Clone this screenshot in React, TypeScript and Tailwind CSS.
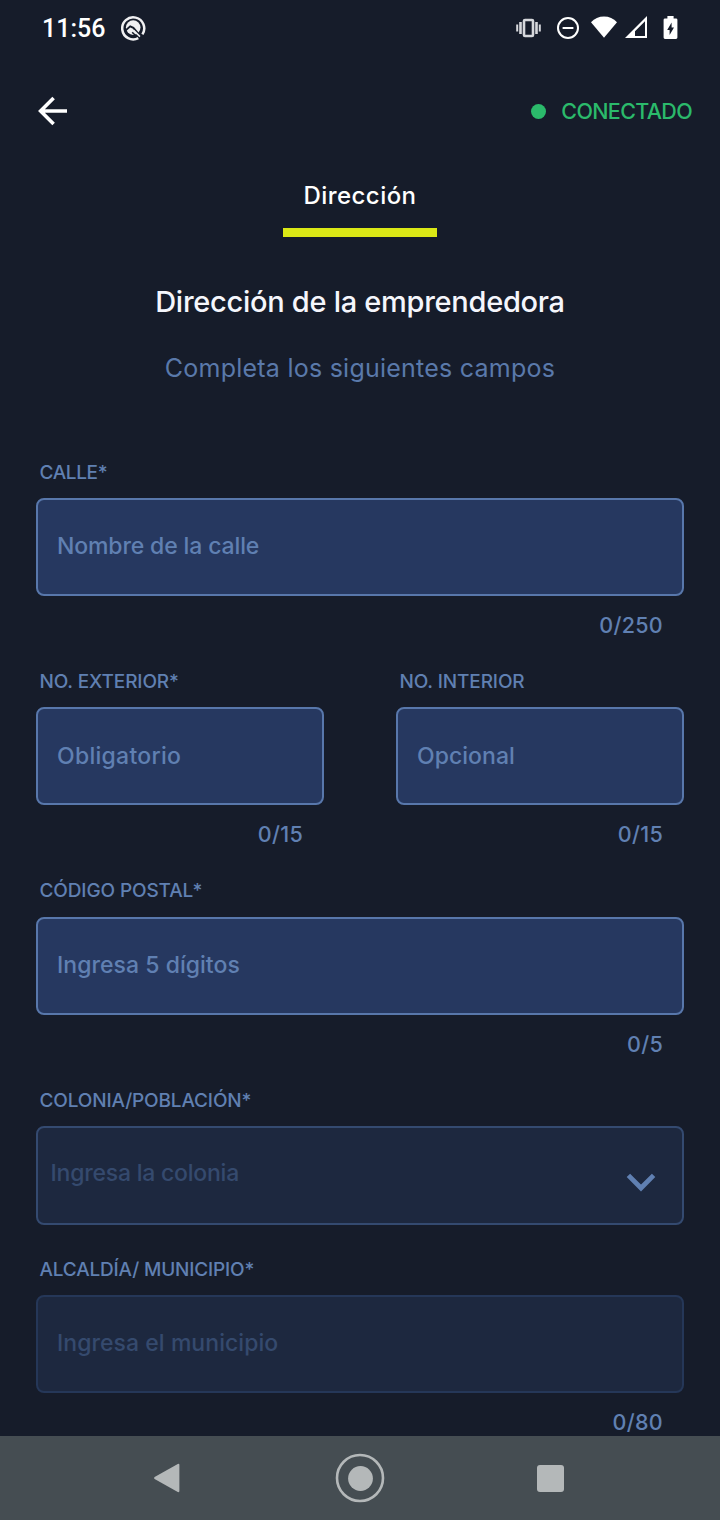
import type { ReactNode } from "react";

type FieldProps = {
  label: string;
  labelClass: string;
  placeholder: string;
  placeholderClass: string;
  counter?: string;
  disabled?: boolean;
};

function Label({ children, className }: { children: ReactNode; className: string }) {
  return (
    <div className={`h-[25px] pt-[0.6px] pl-[3.5px] text-[19px] leading-6 font-medium whitespace-nowrap text-[#6080b2] ${className}`}>
      {children}
    </div>
  );
}

function Field({ label, labelClass, placeholder, placeholderClass, counter, disabled }: FieldProps) {
  return (
    <div className="flex flex-1 flex-col">
      <Label className={labelClass}>{label}</Label>
      <div
        className={`mt-[13px] flex h-[98px] items-center rounded-lg border-2 pb-px pl-[19px] text-[23px] font-medium whitespace-nowrap ${
          disabled ? "border-[#253758] bg-[#1d283f] text-[#354a6e]" : "border-[#5877ab] bg-[#263860] text-[#6080b2]"
        } ${placeholderClass}`}
      >
        {placeholder}
      </div>
      <div className="mt-[17px] h-6 pr-[21px] text-right text-[21.5px] leading-6 font-medium tracking-[0.3px] text-[#6080b2]">
        {counter}
      </div>
    </div>
  );
}

function StatusBar() {
  return (
    <div className="flex h-14 items-center justify-between pr-[41px] pl-[42px] text-white">
      <div className="flex items-center">
        <span className="w-[79px] pt-0.5 font-['Roboto',sans-serif] text-[25px] leading-7 font-medium">11:56</span>
        <svg width="25" height="26" viewBox="0 0 25 26" fill="none">
          <path d="M17.3 23.1A11 11 0 1 1 21.4 19.4" stroke="#f0f0f2" strokeWidth="2.5" />
          <circle cx="12.2" cy="12.6" r="7.3" fill="#f0f0f2" />
          <path d="M4.4 15.6L9.2 11.4L12.4 12.8L19 20.6" stroke="#161c2a" strokeWidth="1.9" />
          <path d="M11.2 17.2L15 21" stroke="#161c2a" strokeWidth="1.6" />
          <path d="M12.6 15.4L19 21.6" stroke="#f0f0f2" strokeWidth="1.5" />
        </svg>
      </div>
      <div className="flex items-center">
        <svg width="26" height="24" viewBox="0 0 26 24" fill="none" stroke="#d6d8dc">
          <rect x="8" y="4" width="9" height="16" rx="1" strokeWidth="2.6" />
          <path d="M4.5 6V18M20.5 6V18" strokeWidth="2.6" />
          <path d="M1.2 8.5V15.5M23.8 8.5V15.5" strokeWidth="2" />
        </svg>
        <svg className="ml-3.5" width="24" height="24" viewBox="0 0 24 24" fill="none" stroke="white" strokeWidth="2">
          <circle cx="12" cy="12" r="10" />
          <path d="M6.6 12H17.4" />
        </svg>
        <svg className="ml-[11px]" width="26" height="24" viewBox="0 0 26 24" fill="white">
          <path d="M13 21.8L0 6.2C3.4 2.2 8 0.4 13 0.4S22.6 2.2 26 6.2Z" />
        </svg>
        <svg className="ml-2" width="22" height="24" viewBox="0 0 22 24">
          <path fillRule="evenodd" fill="white" d="M0 22L22 0V22ZM10 20H20V5.2L10 15.2Z" />
        </svg>
        <svg className="mr-px ml-4" width="15" height="24" viewBox="0 0 15 24">
          <path fill="white" d="M4.4 0H10.6V2.4H13Q14.4 2.4 14.4 3.8V21.6Q14.4 23 13 23H2Q.6 23 .6 21.6V3.8Q.6 2.4 2 2.4H4.4Z" />
          <path fill="#161c2a" d="M8.6 6.5V11.6H11L6.6 19V14H4.2Z" />
        </svg>
      </div>
    </div>
  );
}

function NavigationBar() {
  return (
    <div className="flex h-[84px] shrink-0 items-center bg-[#454d52] pr-[156px] pl-[153px]">
      <div className="flex w-full items-center justify-between">
        <svg width="28" height="30" viewBox="0 0 28 30" fill="#b4b8b9">
          <path d="M1.6 14.1L24.8 .9Q26.4 .4 26.4 2V28Q26.4 29.6 24.8 29L1.6 15.9Q.4 15 1.6 14.1Z" />
        </svg>
        <svg className="ml-0.5" width="50" height="50" viewBox="0 0 50 50">
          <circle cx="25" cy="25" r="23" fill="none" stroke="#b4b8b9" strokeWidth="2.6" />
          <circle cx="25.5" cy="25.5" r="12.4" fill="#b4b8b9" />
        </svg>
        <div className="size-[27px] rounded-[3px] bg-[#b4b8b9]" />
      </div>
    </div>
  );
}

export default function App() {
  return (
    <div className="flex h-[1520px] w-[720px] flex-col overflow-hidden bg-[#161c2a] font-['Inter',sans-serif]">
      <div className="flex min-h-0 flex-1 flex-col overflow-hidden">
        <StatusBar />
        <header className="flex h-[110px] shrink-0 items-center justify-between pr-7 pl-[37px]">
          <svg width="32" height="32" viewBox="0 0 32 32" fill="none" stroke="white" strokeWidth="3.6">
            <path d="M30 16H4M16.6 3L3.6 16L16.6 29" />
          </svg>
          <div className="flex items-center gap-[15.5px] text-[21.5px] leading-6 font-medium tracking-[-0.67px] text-[#2bba6b]">
            <span className="size-[15px] rounded-full bg-[#2bba6b]" />
            <span>CONECTADO</span>
          </div>
        </header>
        <div className="flex flex-col items-center">
          <div className="mt-4 h-7 text-[24px] leading-7 font-medium tracking-[0.45px] text-white">Dirección</div>
          <div className="mt-[18px] h-[9px] w-[154px] bg-[#dbe816]" />
          <h1 className="mt-[47px] text-[29px] leading-9 font-medium tracking-[-0.28px] whitespace-nowrap text-[#f5f6fc]">
            Dirección de la emprendedora
          </h1>
          <p className="mt-8 text-[25px] leading-8 font-normal tracking-[0.24px] whitespace-nowrap text-[#5a79aa]">
            Completa los siguientes campos
          </p>
        </div>
        <main className="mt-[76px] flex flex-col gap-[32.4px] px-9">
          <Field
            label="CALLE*"
            labelClass="tracking-[-0.35px]"
            placeholder="Nombre de la calle"
            placeholderClass="tracking-[-0.13px]"
            counter="0/250"
          />
          <div className="flex gap-[72px]">
            <Field
              label="NO. EXTERIOR*"
              labelClass="tracking-[-0.12px]"
              placeholder="Obligatorio"
              placeholderClass="tracking-[0.28px]"
              counter="0/15"
            />
            <Field
              label="NO. INTERIOR"
              labelClass="tracking-[-0.12px]"
              placeholder="Opcional"
              placeholderClass="tracking-[0.04px]"
              counter="0/15"
            />
          </div>
          <Field
            label="CÓDIGO POSTAL*"
            labelClass="tracking-[-0.12px]"
            placeholder="Ingresa 5 dígitos"
            placeholderClass="tracking-[0.04px]"
            counter="0/5"
          />
          <div className="-mb-[0.4px]">
            <Label className="tracking-[-0.14px]">COLONIA/POBLACIÓN*</Label>
            <div className="mt-[13px] flex h-[99px] items-center justify-between rounded-lg border-2 border-[#344a70] bg-[#1d283f] pr-[26px] pl-[12.5px] text-[23px] font-medium tracking-[-0.22px] whitespace-nowrap text-[#354a6e]">
              <span className="pb-[5px]">Ingresa la colonia</span>
              <svg className="mt-[15px]" width="30" height="20" viewBox="0 0 30 20" fill="none" stroke="#6080b2" strokeWidth="4.8">
                <path d="M2.4 2.4L15 15L27.6 2.4" />
              </svg>
            </div>
          </div>
          <Field
            label="ALCALDÍA/ MUNICIPIO*"
            labelClass="tracking-[-0.17px]"
            placeholder="Ingresa el municipio"
            placeholderClass="tracking-[0.05px]"
            counter="0/80"
            disabled
          />
        </main>
      </div>
      <NavigationBar />
    </div>
  );
}
